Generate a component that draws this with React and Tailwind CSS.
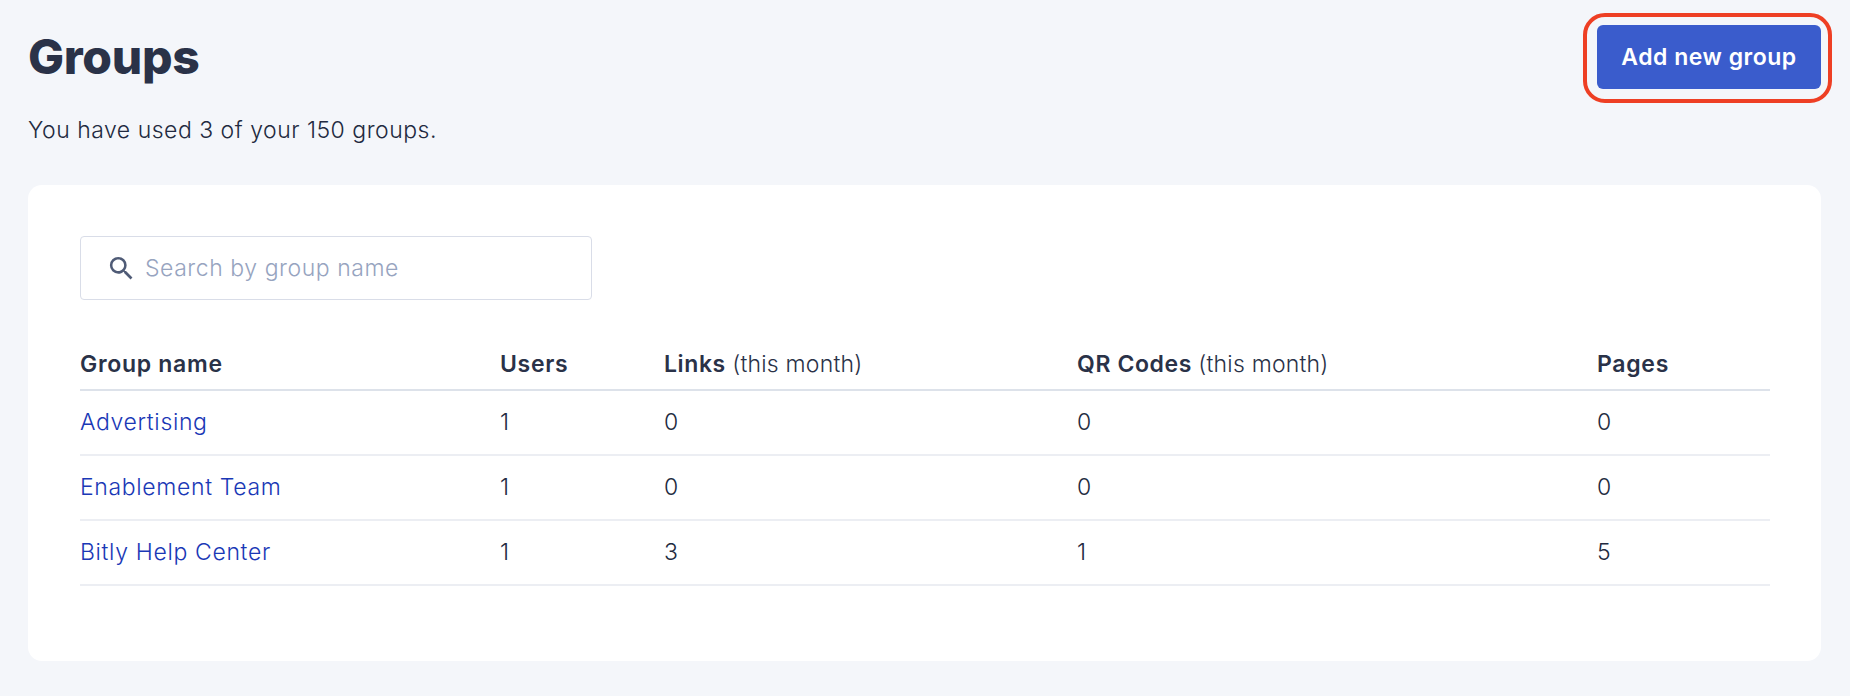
import React from 'react';
import { MdSearch } from 'react-icons/md';

const groups = [
  { name: 'Advertising', users: 1, links: 0, codes: 0, pages: 0 },
  { name: 'Enablement Team', users: 1, links: 0, codes: 0, pages: 0 },
  { name: 'Bitly Help Center', users: 1, links: 3, codes: 1, pages: 5 },
];

const App = () => {
  return (
    <div className="w-[1850px] h-[696px] overflow-hidden bg-[#f4f6fa] pl-[28px] pr-[29px] text-[#2a3248] font-['Inter',sans-serif]">
      {/* Header */}
      <div className="flex justify-between items-start pt-[25px]">
        <div>
          <h1 className="text-[48px] leading-[64px] font-extrabold tracking-[-0.3px]">Groups</h1>
          <p className="mt-[26px] text-[23px] leading-[30px] tracking-[0.5px] font-[350] text-[#222a40]">You have used 3 of your 150 groups.</p>
        </div>
        <div className="relative">
          <button className="w-[224px] h-[64px] bg-[#3a5ccc] rounded-[6px] text-white text-[23px] font-semibold tracking-[0.5px]">
            Add new group
          </button>
          <div className="absolute -left-[14px] -right-[11px] -top-[12px] -bottom-[14px] border-[4px] border-[#ee3f24] rounded-[22px]"></div>
        </div>
      </div>

      {/* Card */}
      <div className="mt-[40px] bg-white rounded-[14px] h-[476px] px-[52px] pt-[51px]">
        <div className="w-[512px] h-[64px] border border-[#d9dde8] rounded-[4px] flex items-center pl-[25px]">
          <MdSearch className="w-[31px] h-[31px] text-[#4f5b76] mr-[8px]" />
          <span className="pt-[1px] text-[23px] tracking-[0.55px] font-[350] text-[#97a4bf]">Search by group name</span>
        </div>

        <table className="mt-[30px] w-[1690px] table-fixed border-collapse text-[23px] tracking-[0.65px] font-[350] text-[#222a40]">
          <colgroup>
            <col className="w-[420px]" />
            <col className="w-[164px]" />
            <col className="w-[413px]" />
            <col className="w-[520px]" />
            <col className="w-[173px]" />
          </colgroup>
          <thead>
            <tr className="h-[60px] border-b-2 border-[#dde2ea] text-left text-[#2a3248]">
              <th className="font-semibold tracking-[0.7px] pt-[9px]">Group name</th>
              <th className="font-semibold tracking-[0.7px] pt-[9px]">Users</th>
              <th className="font-semibold tracking-[0.6px] pt-[9px]">Links <span className="font-[350] tracking-[0.2px]">(this month)</span></th>
              <th className="font-semibold tracking-[0.6px] pt-[9px]">QR Codes <span className="font-[350] tracking-[0.2px]">(this month)</span></th>
              <th className="font-semibold tracking-[0.7px] pt-[9px]">Pages</th>
            </tr>
          </thead>
          <tbody>
            {groups.map((group) => (
              <tr key={group.name} className="h-[65px] border-b-2 border-[#eceef3]">
                <td className="text-[#1a38b6] pb-[1px]">{group.name}</td>
                <td className="pb-[1px]">{group.users}</td>
                <td className="pb-[1px]">{group.links}</td>
                <td className="pb-[1px]">{group.codes}</td>
                <td className="pb-[1px]">{group.pages}</td>
              </tr>
            ))}
          </tbody>
        </table>
      </div>
    </div>
  );
};

export default App;
